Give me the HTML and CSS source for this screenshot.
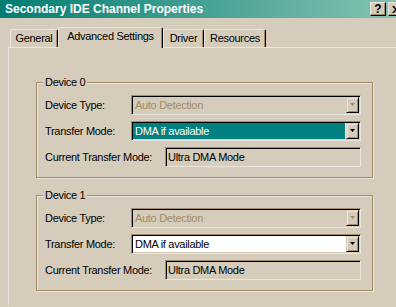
FILE: index.html
```html
<!DOCTYPE html>
<html lang="en">
<head>
    <meta charset="UTF-8">
    <title>Secondary IDE Channel Properties</title>
    <link rel="stylesheet" href="styles.css">
</head>
<body>
    <div class="window">
        <div class="titlebar">
            <span class="title">Secondary IDE Channel Properties</span>
            <div class="caption-buttons">
                <span class="cap-btn help">?</span>
                <span class="cap-btn close">
                    <svg width="8" height="7" viewBox="0 0 8 7">
                        <path d="M0 0h2l2 2.5 2-2.5h2l-3 3.5 3 3.5h-2l-2-2.5-2 2.5h-2l3-3.5z" fill="#000"/>
                    </svg>
                </span>
            </div>
        </div>

        <div class="tabs">
            <div class="tab tab-general">General</div>
            <div class="tab tab-advanced active">Advanced Settings</div>
            <div class="tab tab-driver">Driver</div>
            <div class="tab tab-resources">Resources</div>
        </div>

        <div class="panel">
            <!-- Device 0 -->
            <div class="group">
                <div class="group-title">Device 0</div>
                <div class="row">
                    <span class="label">Device Type:</span>
                    <div class="combo disabled">
                        <span class="value">Auto Detection</span>
                        <span class="drop">
                            <svg width="5" height="4" viewBox="0 0 5 4"><path d="M0 0h5l-2.5 3z"/></svg>
                        </span>
                    </div>
                </div>
                <div class="row">
                    <span class="label">Transfer Mode:</span>
                    <div class="combo focused">
                        <span class="value">DMA if available</span>
                        <span class="drop">
                            <svg width="5" height="4" viewBox="0 0 5 4"><path d="M0 0h5l-2.5 3z"/></svg>
                        </span>
                    </div>
                </div>
                <div class="row">
                    <span class="label wide">Current Transfer Mode:</span>
                    <div class="readout">Ultra DMA Mode</div>
                </div>
            </div>

            <!-- Device 1 -->
            <div class="group">
                <div class="group-title">Device 1</div>
                <div class="row">
                    <span class="label">Device Type:</span>
                    <div class="combo disabled">
                        <span class="value">Auto Detection</span>
                        <span class="drop">
                            <svg width="5" height="4" viewBox="0 0 5 4"><path d="M0 0h5l-2.5 3z"/></svg>
                        </span>
                    </div>
                </div>
                <div class="row">
                    <span class="label">Transfer Mode:</span>
                    <div class="combo">
                        <span class="value">DMA if available</span>
                        <span class="drop">
                            <svg width="5" height="4" viewBox="0 0 5 4"><path d="M0 0h5l-2.5 3z"/></svg>
                        </span>
                    </div>
                </div>
                <div class="row">
                    <span class="label wide">Current Transfer Mode:</span>
                    <div class="readout">Ultra DMA Mode</div>
                </div>
            </div>
        </div>
    </div>
</body>
</html>
```

FILE: styles.css
```css
body {
    margin: 0;
    background-color: #d5ccbb;
    font-family: "Liberation Sans", Arial, sans-serif;
    font-size: 11px;
    letter-spacing: -0.3px;
    color: #000;
    overflow: hidden;
}
.window {
    width: 406px;
    height: 307px;
    overflow: hidden;
}

/* title bar */
.titlebar {
    height: 18px;
    display: flex;
    justify-content: space-between;
    align-items: center;
    background: linear-gradient(to right, #037d72, #88c4b4);
}
.title {
    padding-left: 5px;
    color: #fff;
    font-size: 12px;
    font-weight: bold;
    letter-spacing: 0;
    line-height: 18px;
}
.caption-buttons {
    display: flex;
    gap: 2px;
    padding-right: 2px;
}
.cap-btn {
    width: 16px;
    height: 14px;
    box-sizing: border-box;
    display: flex;
    align-items: center;
    justify-content: center;
    background-color: #d5ccbb;
    border: 1px solid;
    border-color: #eae6dd #000 #000 #eae6dd;
    box-shadow: inset -1px -1px #a28d68;
}
.help {
    font-weight: bold;
    font-size: 12px;
    letter-spacing: 0;
    line-height: 12px;
}

/* tabs */
.tabs {
    display: flex;
    align-items: flex-end;
    height: 20px;
    margin-top: 9px;
    padding-left: 10px;
}
.tab {
    height: 18px;
    box-sizing: border-box;
    line-height: 17px;
    text-align: center;
    border: 1px solid;
    border-bottom: none;
    border-color: #eae6dd #000 #000 #eae6dd;
    border-radius: 2px 2px 0 0;
    box-shadow: inset -1px 0 #a28d68;
}
.tab.active {
    position: relative;
    z-index: 1;
    height: 21px;
    margin-bottom: -1px;
    line-height: 17px;
    background-color: #d5ccbb;
}
.tab-general { width: 48px; }
.tab-advanced { width: 105px; }
.tab-driver { width: 41px; }
.tab-resources { width: 62px; }

/* tab page */
.panel {
    margin-left: 8px;
    height: 259px;
    box-sizing: border-box;
    padding: 34px 0 0 27px;
    border-top: 1px solid #eae6dd;
    border-left: 1px solid #eae6dd;
}

/* group boxes */
.group {
    width: 337px;
    box-sizing: border-box;
    display: flex;
    flex-direction: column;
    gap: 6px;
    padding: 0 11px 10px 8px;
    border: 1px solid #a28d68;
    box-shadow: inset 1px 1px #eae6dd, 1px 1px #eae6dd;
}
.group + .group {
    margin-top: 17px;
    padding-top: 2px;
}
.group-title {
    align-self: flex-start;
    margin: -7px 0 0 -2px;
    padding: 0 2px;
    line-height: 13px;
    background-color: #d5ccbb;
}
.group + .group .group-title {
    margin-top: -9px;
}
.group + .group .row:first-of-type {
    margin-top: 2px;
}
.row {
    display: flex;
    align-items: center;
    height: 20px;
}
.label {
    width: 86px;
    flex-shrink: 0;
}
.label.wide {
    width: 120px;
}

/* sunken fields */
.combo,
.readout {
    flex: 1;
    height: 20px;
    box-sizing: border-box;
    border: 1px solid;
    border-color: #a28d68 #eae6dd #eae6dd #a28d68;
    box-shadow: inset 1px 1px #000, inset -1px -1px #d5ccbb;
    padding: 1px;
}
.combo {
    display: flex;
    background-color: #fff;
}
.combo .value {
    flex: 1;
    line-height: 16px;
    padding-left: 2px;
}
.combo.disabled {
    background-color: #d5ccbb;
    color: #a28d68;
}
.combo.focused .value {
    background-color: #008080;
    color: #fff;
}
.drop {
    width: 13px;
    margin-left: 1px;
    box-sizing: border-box;
    display: flex;
    align-items: center;
    justify-content: center;
    background-color: #d5ccbb;
    border: 1px solid;
    border-color: #d5ccbb #000 #000 #d5ccbb;
    box-shadow: inset 1px 1px #eae6dd, inset -1px -1px #a28d68;
}
.drop svg {
    fill: #000;
}
.combo.disabled .drop svg {
    fill: #a28d68;
}
.readout {
    background-color: #d5ccbb;
    line-height: 16px;
    padding-left: 2px;
}
```
